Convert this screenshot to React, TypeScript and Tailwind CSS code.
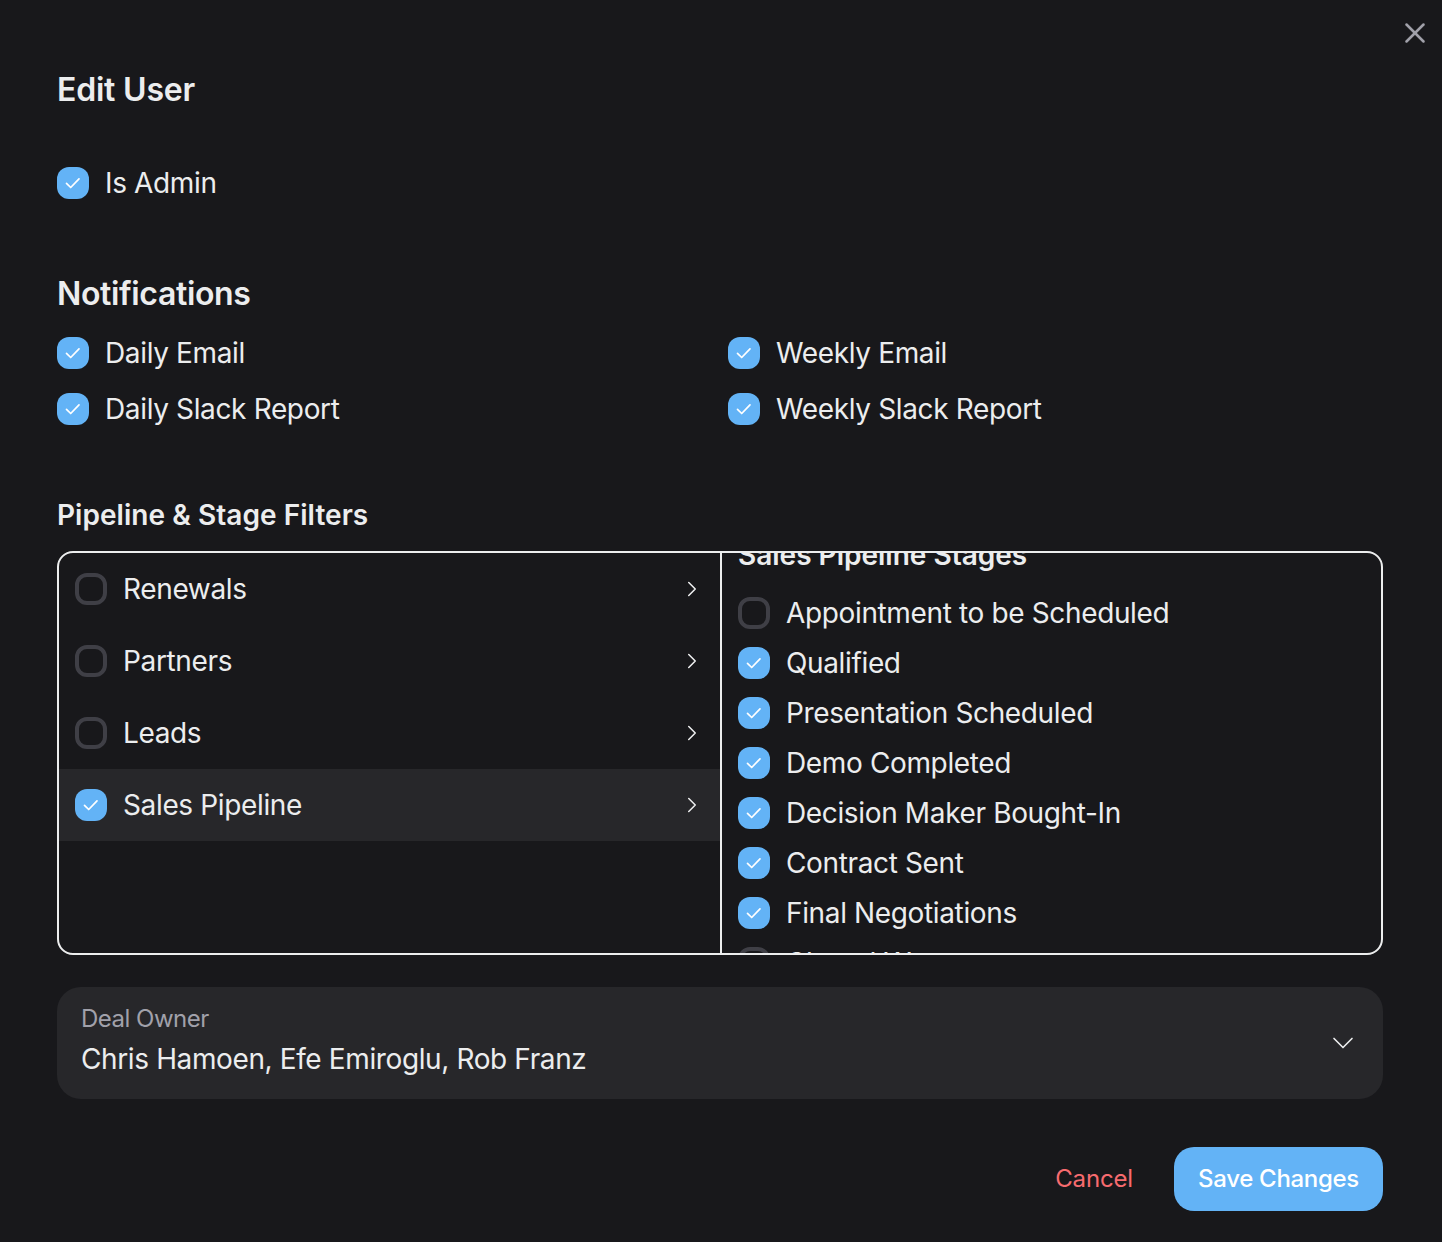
import { ChevronDown, ChevronRight, X } from 'lucide-react'

const stages = [
  { label: 'Appointment to be Scheduled', checked: false },
  { label: 'Qualified', checked: true },
  { label: 'Presentation Scheduled', checked: true },
  { label: 'Demo Completed', checked: true },
  { label: 'Decision Maker Bought-In', checked: true },
  { label: 'Contract Sent', checked: true },
  { label: 'Final Negotiations', checked: true },
  { label: 'Closed Won', checked: false },
]

const pipelines = [
  { label: 'Renewals', checked: false },
  { label: 'Partners', checked: false },
  { label: 'Leads', checked: false },
  { label: 'Sales Pipeline', checked: true },
]

function Box({ checked }: { checked: boolean }) {
  if (!checked) {
    return <span className="block w-8 h-8 shrink-0 rounded-xl border-4 border-[#3f3f46]" />
  }
  return (
    <span className="flex items-center justify-center w-8 h-8 shrink-0 rounded-xl bg-[#63b3f6]">
      <svg width="16" height="16" viewBox="0 0 16 16" fill="none" stroke="#ffffff" strokeWidth="1.7" strokeLinecap="round" strokeLinejoin="round">
        <path d="M1.5 8.3 L5.7 12.5 L14 3.8" />
      </svg>
    </span>
  )
}

function CheckRow({ label, checked = true }: { label: string; checked?: boolean }) {
  return (
    <div className="flex items-center gap-4">
      <Box checked={checked} />
      <span className="text-[28px] leading-8 tracking-[-0.36px] text-[#ecedee]">{label}</span>
    </div>
  )
}

export default function App() {
  return (
    <div className="relative w-[1442px] h-[1242px] overflow-hidden bg-[#18181b] px-[57px] pt-[70px] font-['Inter',sans-serif]">
      <button type="button" className="absolute top-4 right-[10px] text-[#a1a1aa]">
        <X size={34} strokeWidth={1.8} />
      </button>

      <h2 className="text-[32px] leading-10 tracking-[-0.2px] font-semibold text-[#ecedee]">Edit User</h2>

      <div className="mt-[57px]">
        <CheckRow label="Is Admin" />
      </div>

      <h3 className="mt-[75px] text-[32px] leading-10 tracking-[-0.35px] font-semibold text-[#ecedee]">Notifications</h3>
      <div className="mt-[23px] grid grid-cols-2 gap-x-4 gap-y-6 w-[1326px]">
        <CheckRow label="Daily Email" />
        <CheckRow label="Weekly Email" />
        <CheckRow label="Daily Slack Report" />
        <CheckRow label="Weekly Slack Report" />
      </div>

      <h3 className="mt-[72px] text-[28px] leading-9 tracking-[0.05px] font-semibold text-[#ecedee]">Pipeline &amp; Stage Filters</h3>
      <div className="mt-[18px] flex h-[404px] w-[1326px] overflow-hidden rounded-2xl border-2 border-[#ecedee]">
        <div className="w-[661px] shrink-0">
          {pipelines.map(p => (
            <div key={p.label} className={`flex items-center h-[72px] pl-4 pr-[15px] ${p.label === 'Sales Pipeline' ? 'bg-[#27272a]' : ''}`}>
              <Box checked={p.checked} />
              <span className="ml-4 flex-1 text-[28px] leading-8 tracking-[-0.36px] text-[#ecedee]">{p.label}</span>
              <ChevronRight size={26} strokeWidth={1.4} className="text-[#ecedee]" />
            </div>
          ))}
        </div>
        <div className="flex-1 overflow-hidden border-l-2 border-[#ecedee] pl-4">
          <div className="-mt-[16px] text-[28px] leading-9 font-semibold text-[#ecedee]">Sales Pipeline Stages</div>
          <div className="mt-[24px] flex flex-col gap-[18px]">
            {stages.map(s => (
              <CheckRow key={s.label} label={s.label} checked={s.checked} />
            ))}
          </div>
        </div>
      </div>

      <div className="mt-8 flex items-center justify-between w-[1326px] h-[112px] rounded-3xl bg-[#27272a] pl-6 pr-[22px]">
        <div className="flex flex-col self-start pt-4">
          <span className="text-2xl leading-8 tracking-[-0.5px] text-[#a1a1aa]">Deal Owner</span>
          <span className="mt-[6px] text-[28px] leading-9 tracking-[-0.38px] text-[#ecedee]">Chris Hamoen, Efe Emiroglu, Rob Franz</span>
        </div>
        <ChevronDown size={36} strokeWidth={1.1} className="text-[#ecedee]" />
      </div>

      <div className="mt-12 flex items-center justify-end gap-[41px] w-[1326px]">
        <span className="text-2xl leading-8 tracking-[-0.15px] text-[#f76b6f]">Cancel</span>
        <button type="button" className="h-16 w-[209px] rounded-[20px] bg-[#63b3f6] text-2xl font-medium tracking-[-0.3px] text-white">Save Changes</button>
      </div>
    </div>
  )
}
